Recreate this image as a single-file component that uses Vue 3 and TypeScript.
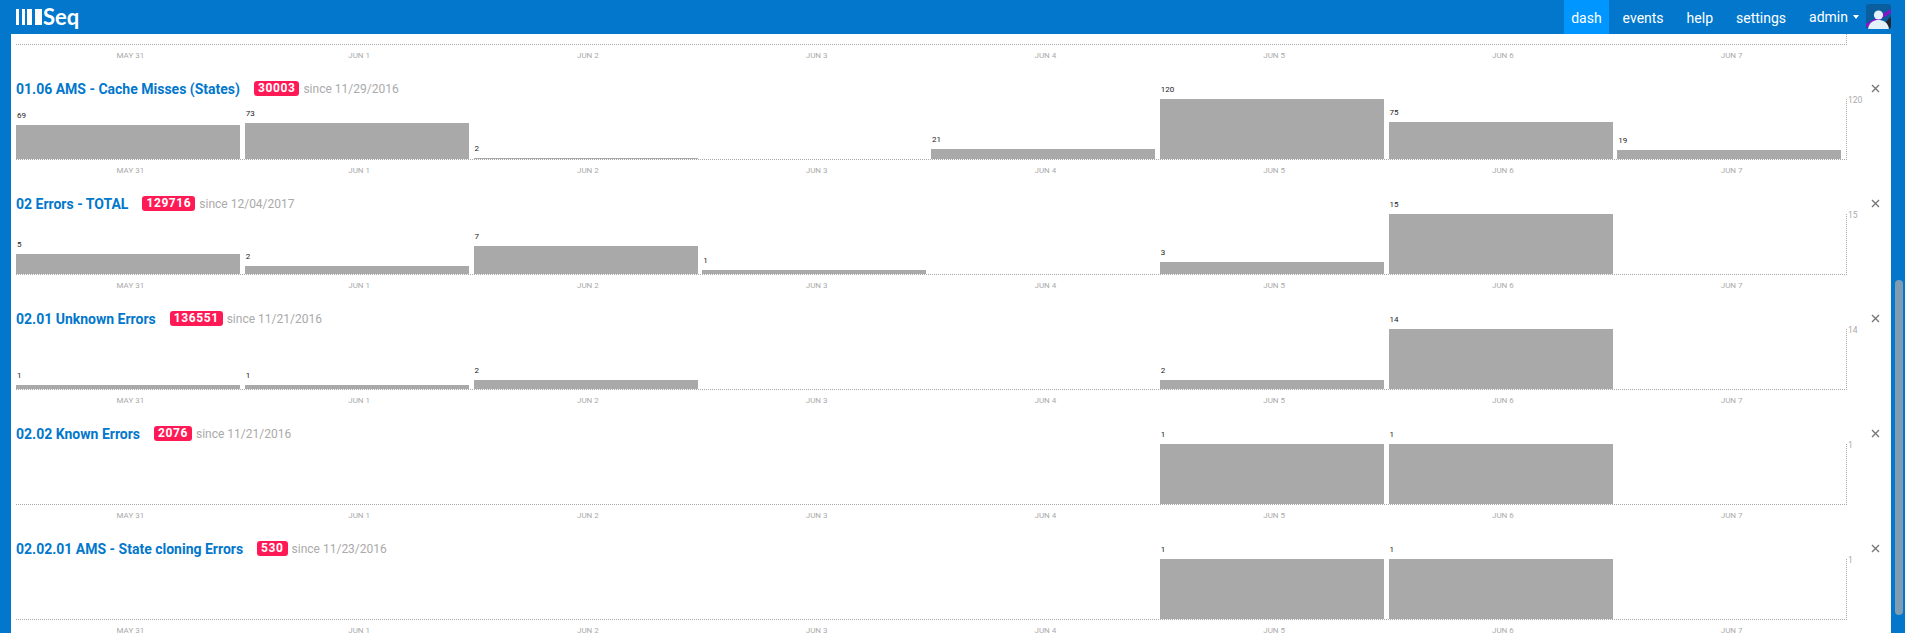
<script setup lang="ts">
const days = ['May 31', 'Jun 1', 'Jun 2', 'Jun 3', 'Jun 4', 'Jun 5', 'Jun 6', 'Jun 7']

type Row = { title: string; count: number; since: string; max: number; values: (number | null)[] }

const rows: Row[] = [
	{ title: '01.06 AMS - Cache Misses (States)', count: 30003, since: '11/29/2016', max: 120, values: [69, 73, 2, null, 21, 120, 75, 19] },
	{ title: '02 Errors - TOTAL', count: 129716, since: '12/04/2017', max: 15, values: [5, 2, 7, 1, null, 3, 15, null] },
	{ title: '02.01 Unknown Errors', count: 136551, since: '11/21/2016', max: 14, values: [1, 1, 2, null, null, 2, 14, null] },
	{ title: '02.02 Known Errors', count: 2076, since: '11/21/2016', max: 1, values: [null, null, null, null, null, 1, 1, null] },
	{ title: '02.02.01 AMS - State cloning Errors', count: 530, since: '11/23/2016', max: 1, values: [null, null, null, null, null, 1, 1, null] },
]

// half pixels go down, the way the reference bars do
const barHeight = (val: number, max: number) => Math.max(1, Math.round((val / max) * 60 - 0.01)) + 'px'
const nav = ['dash', 'events', 'help', 'settings']
</script>

<template>
	<div class="page">
		<header class="top">
			<div class="logo">
				<i class="b1"></i><i class="b2"></i><i class="b3"></i><i class="b4"></i>
				<span>Seq</span>
			</div>
			<nav class="nav">
				<a v-for="(n, i) in nav" :key="n" :class="{ on: i === 0 }">{{ n }}</a>
				<a class="user">admin<span class="caret"></span></a>
				<svg class="avatar" width="25" height="25" viewBox="0 0 25 25">
					<defs>
						<clipPath id="av"><rect width="25" height="25" rx="3" /></clipPath>
					</defs>
					<g clip-path="url(#av)">
						<rect width="25" height="25" fill="#0a5e9e" />
						<path d="M14 25 L25 12 V25 Z" fill="#23262e" />
						<path d="M0 20 L25 5 V9 L0 24 Z" fill="#8a12c8" />
						<circle cx="12.5" cy="11" r="4.6" fill="#e2f1fa" />
						<path d="M2 25 C3 18 8 16 12.5 16 C17 16 22 18 23 25 Z" fill="#e2f1fa" />
					</g>
				</svg>
			</nav>
		</header>

		<main class="main">
			<div class="stub">
				<div class="chart short"></div>
				<div class="days">
					<span v-for="d in days" :key="d">{{ d }}</span>
				</div>
			</div>

			<section v-for="r in rows" :key="r.title" class="row">
				<div class="head">
					<a class="title">{{ r.title }}</a>
					<span class="badge">{{ r.count }}</span>
					<span class="since">since {{ r.since }}</span>
					<svg class="close" width="9" height="9" viewBox="0 0 9 9">
						<path d="M1 1 L8 8 M8 1 L1 8" stroke="#777" stroke-width="1.4" fill="none" />
					</svg>
				</div>
				<div class="chart">
					<div v-for="(v, i) in r.values" :key="i" class="col">
						<template v-if="v !== null">
							<span class="val">{{ v }}</span>
							<div class="bar" :style="{ height: barHeight(v, r.max) }"></div>
						</template>
					</div>
					<span class="ymax">{{ r.max }}</span>
				</div>
				<div class="days">
					<span v-for="d in days" :key="d">{{ d }}</span>
				</div>
			</section>
		</main>

		<div class="thumb"></div>
	</div>
</template>

<style scoped>
.page {
	position: relative;
	display: flex;
	flex-direction: column;
	height: 633px;
	overflow: hidden;
	background: #0277cc;
	font-family: Roboto, 'Liberation Sans', sans-serif;
}
.top {
	display: flex;
	justify-content: space-between;
	flex: none;
	height: 34px;
	padding: 0 14px 0 16px;
}
.logo {
	display: flex;
	align-items: center;
	gap: 2.5px;
	color: #fff;
}
.logo i {
	display: block;
	height: 16px;
	margin-top: -1px;
	background: #fff;
}
.logo .b1 { width: 3px; }
.logo .b2 { width: 3px; }
.logo .b3 { width: 5px; }
.logo .b4 { width: 7px; }
.logo span {
	margin-left: -1px;
	font-family: Lato, sans-serif;
	font-size: 22px;
	font-weight: 700;
	line-height: 34px;
}
.nav {
	display: flex;
	align-items: stretch;
	color: #fff;
	font-size: 14px;
	line-height: 36px;
}
.nav a {
	padding: 0 15px 0 8px;
}
.nav a.on {
	background: #0096ff;
	padding: 0 7px;
	margin-right: 6px;
}
.nav a + a {
	padding-right: 15px;
}
.user {
	display: flex;
	align-items: center;
	line-height: 36px;
	padding-right: 7px !important;
}
.caret {
	width: 0;
	height: 0;
	margin: 0 0 0 5px;
	border-left: 3px solid transparent;
	border-right: 3px solid transparent;
	border-top: 4px solid #fff;
}
.avatar {
	align-self: flex-start;
	margin-top: 4px;
}
.main {
	flex: 1;
	margin: 0 14px 0 11px;
	padding-left: 5px;
	background: #fff;
	overflow: hidden;
}
.stub {
	height: 35px;
}
.chart.short {
	height: 10px;
}
.row {
	display: flex;
	flex-direction: column;
	height: 115px;
	padding-top: 9px;
	box-sizing: border-box;
}
.head {
	display: flex;
	align-items: center;
	flex: none;
	height: 21px;
	padding-right: 11px;
}
.title {
	margin-right: 14px;
	color: #0277cc;
	font-size: 14px;
	font-weight: 700;
}
.badge {
	margin-right: 4px;
	padding: 0 4px;
	border-radius: 3px;
	background: #ff1a55;
	color: #fff;
	font-size: 12px;
	font-weight: 700;
	line-height: 15px;
	letter-spacing: 0.6px;
}
.since {
	color: #aaa;
	font-size: 12px;
}
.close {
	margin-left: auto;
}
.chart {
	position: relative;
	display: flex;
	flex: none;
	box-sizing: content-box;
	width: 1830px;
	height: 60px;
	border-right: 1px dotted #aaa;
	border-bottom: 1px dotted #aaa;
}
.col {
	display: flex;
	flex-direction: column;
	justify-content: flex-end;
	width: 228.75px;
}
.val {
	flex: none;
	padding-left: 1px;
	color: #222;
	font-size: 8px;
	line-height: 10px;
	margin-bottom: 4px;
}
.bar {
	flex: none;
	width: 224px;
	background: #a9a9a9;
}
.ymax {
	position: absolute;
	left: 100%;
	top: -4px;
	margin-left: 2px;
	color: #aaa;
	font-size: 8.5px;
	line-height: 10px;
}
.days {
	display: flex;
	width: 1830px;
	padding-top: 6px;
}
.days span {
	width: 228.75px;
	color: #aaa;
	font-size: 8px;
	line-height: 10px;
	text-align: center;
	text-transform: uppercase;
}
.thumb {
	position: absolute;
	left: 1895px;
	top: 280px;
	width: 8px;
	height: 335px;
	border-radius: 4px;
	background: #7f9db2;
}
</style>

<style>
html,
body {
	overflow: hidden;
}
</style>
